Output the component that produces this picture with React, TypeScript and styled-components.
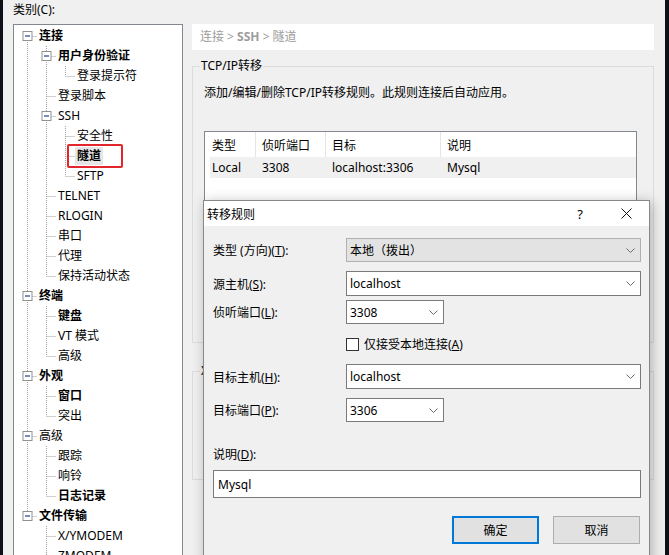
import React from 'react';
import styled, { createGlobalStyle } from 'styled-components';

const GlobalStyle = createGlobalStyle`
  html, body { margin: 0; padding: 0; background: #0d1018; }
  body {
    font-family: "Noto Sans", "Noto Sans CJK SC", sans-serif;
    font-size: 12px;
    color: #000;
  }
  #root { width: 669px; height: 555px; overflow: hidden; }
`;

type TreeNode = { label: string; level: number; bold?: boolean; open?: boolean; selected?: boolean };

const tree: TreeNode[] = [
  { label: '连接', level: 0, bold: true, open: true },
  { label: '用户身份验证', level: 1, bold: true, open: true },
  { label: '登录提示符', level: 2 },
  { label: '登录脚本', level: 1 },
  { label: 'SSH', level: 1, open: true },
  { label: '安全性', level: 2 },
  { label: '隧道', level: 2, bold: true, selected: true },
  { label: 'SFTP', level: 2 },
  { label: 'TELNET', level: 1 },
  { label: 'RLOGIN', level: 1 },
  { label: '串口', level: 1 },
  { label: '代理', level: 1 },
  { label: '保持活动状态', level: 1 },
  { label: '终端', level: 0, bold: true, open: true },
  { label: '键盘', level: 1, bold: true },
  { label: 'VT 模式', level: 1 },
  { label: '高级', level: 1 },
  { label: '外观', level: 0, bold: true, open: true },
  { label: '窗口', level: 1, bold: true },
  { label: '突出', level: 1 },
  { label: '高级', level: 0, open: true },
  { label: '跟踪', level: 1 },
  { label: '响铃', level: 1 },
  { label: '日志记录', level: 1, bold: true },
  { label: '文件传输', level: 0, bold: true, open: true },
  { label: 'X/YMODEM', level: 1 },
  { label: 'ZMODEM', level: 1 },
];

// does a later sibling at `level` follow row i (before the branch closes)?
const continues = (i: number, level: number) => {
  for (let j = i + 1; j < tree.length; j++) {
    if (tree[j].level < level) return false;
    if (tree[j].level === level) return true;
  }
  return false;
};

const Window = styled.div`
  position: relative;
  margin-left: 3px;
  width: 662px;
  height: 555px;
  background: #f0f0f0;
  display: flex;
  gap: 9px;
  padding-left: 10px;
  box-sizing: border-box;
  overflow: hidden;
`;

const LeftCol = styled.div`
  width: 170px;
  flex-shrink: 0;
`;

const CategoryLabel = styled.div`
  height: 24px;
  line-height: 20px;
`;

const TreeBox = styled.div`
  height: 560px;
  border: 1px solid #828790;
  background: #fff;
  box-sizing: border-box;
  padding-top: 1px;
`;

const TreeRow = styled.div`
  display: flex;
  align-items: center;
  height: 20px;
`;

const TreeLabel = styled.span<{ $bold?: boolean; $selected?: boolean }>`
  position: relative;
  line-height: 18px;
  white-space: nowrap;
  font-weight: ${p => (p.$bold ? 700 : 400)};
  padding: 0 2px;
  margin-left: -2px;
  background: ${p => (p.$selected ? '#e6e6e6' : 'transparent')};
  &::after {
    content: '';
    display: ${p => (p.$selected ? 'block' : 'none')};
    position: absolute;
    left: -8px;
    right: -20px;
    top: -3px;
    bottom: -3px;
    border: 2px solid #e3262b;
    border-radius: 2px;
  }
`;

const RightCol = styled.div`
  width: 462px;
  flex-shrink: 0;
  padding-top: 24px;
`;

const Crumb = styled.div`
  height: 26px;
  line-height: 26px;
  background: #fff;
  padding-left: 8px;
  color: #9d9d9d;
  b { font-weight: 700; }
`;

const Group = styled.fieldset<{ $top: number; $height: number }>`
  margin: ${p => p.$top}px 0 0;
  padding: 0 7px;
  min-width: 0;
  height: ${p => p.$height}px;
  box-sizing: border-box;
  border: 1px solid #dcdcdc;
`;

const Legend = styled.legend`
  padding: 0 1px;
  line-height: 16px;
`;

const Description = styled.div`
  margin-top: 9px;
  padding-left: 4px;
  line-height: 20px;
`;

const ListView = styled.div`
  margin: 28px 0 0 4px;
  width: 433px;
  height: 150px;
  border: 1px solid #828790;
  background: #fff;
  box-sizing: border-box;
`;

const ListRow = styled.div<{ $header?: boolean }>`
  display: grid;
  grid-template-columns: 51px 70px 115px 1fr;
  height: ${p => (p.$header ? 25 : 21)}px;
  background: ${p => (p.$header ? '#fff' : 'linear-gradient(to right, transparent 5px, #f0f0f0 5px)')};
`;

const Cell = styled.div<{ $header?: boolean }>`
  display: flex;
  align-items: center;
  padding-left: 6px;
  white-space: nowrap;
  box-sizing: border-box;
  border-right: 1px solid ${p => (p.$header ? '#e5e5e5' : 'transparent')};
  &:first-child { padding-left: 7px; }
  &:last-child { border-right: none; }
`;

const Dialog = styled.div`
  position: absolute;
  left: 200px;
  top: 200px;
  width: 447px;
  height: 380px;
  border: 1px solid #888;
  background: #f0f0f0;
  box-sizing: border-box;
  box-shadow: 2px 2px 12px rgba(0, 0, 0, 0.28);
`;

const TitleBar = styled.div`
  height: 25px;
  display: flex;
  align-items: center;
  background: #fff;
  padding-left: 3px;
`;

const TitleText = styled.span`
  flex: 1;
`;

const TitleButton = styled.div`
  width: 46px;
  height: 25px;
  display: flex;
  align-items: center;
  justify-content: center;
  font-size: 13px;
`;

const DialogBody = styled.div`
  padding: 0 8px 0 9px;
`;

const FieldRow = styled.div<{ $top: number; $height: number }>`
  display: grid;
  grid-template-columns: 133px 1fr;
  align-items: center;
  margin-top: ${p => p.$top}px;
  height: ${p => p.$height}px;
`;

const Combo = styled.div<{ $width?: number; $disabled?: boolean }>`
  display: flex;
  align-items: center;
  height: 100%;
  width: ${p => (p.$width ? `${p.$width}px` : '100%')};
  box-sizing: border-box;
  padding: 0 5px 0 3px;
  border: 1px solid ${p => (p.$disabled ? '#b0b0b0' : '#7a7a7a')};
  background: ${p => (p.$disabled ? '#e3e3e3' : '#fff')};
  span { flex: 1; }
`;

const CheckLine = styled.label`
  grid-column: 2;
  display: flex;
  align-items: center;
  gap: 5px;
`;

const CheckBox = styled.span`
  width: 13px;
  height: 13px;
  border: 1px solid #333;
  background: #fff;
  box-sizing: border-box;
`;

const PlainLabel = styled.div<{ $top: number }>`
  margin-top: ${p => p.$top}px;
  line-height: 20px;
`;

const TextField = styled.div`
  margin-top: 5px;
  height: 28px;
  display: flex;
  align-items: center;
  padding-left: 4px;
  border: 1px solid #7a7a7a;
  background: #fff;
  box-sizing: border-box;
`;

const ButtonBar = styled.div`
  display: flex;
  justify-content: flex-end;
  gap: 14px;
  margin-top: 18px;
  padding-right: 1px;
`;

const Button = styled.div<{ $primary?: boolean }>`
  width: 87px;
  height: 28px;
  display: flex;
  align-items: center;
  justify-content: center;
  box-sizing: border-box;
  background: #e1e1e1;
  border: ${p => (p.$primary ? '2px solid #0078d7' : '1px solid #adadad')};
`;

const Chevron = () => (
  <svg width="9" height="5" viewBox="0 0 9 5">
    <path d="M0.5 0.5 L4.5 4.5 L8.5 0.5" fill="none" stroke="#6a6a6a" strokeWidth="1" />
  </svg>
);

const TreeGutter = ({ index, node }: { index: number; node: TreeNode }) => {
  const n = node.level;
  const w = 25 + 19 * n;
  const x = (k: number) => 13 + 19 * k + 0.5;
  const dots = { stroke: '#a0a0a0', strokeWidth: 1, strokeDasharray: '1 1' };
  const lines: React.ReactNode[] = [];
  for (let k = 0; k < n; k++) {
    if (continues(index, k)) lines.push(<line key={`a${k}`} x1={x(k)} y1={0} x2={x(k)} y2={20} {...dots} />);
  }
  const first = index === 0;
  lines.push(<line key="top" x1={x(n)} y1={first ? 10 : 0} x2={x(n)} y2={10} {...dots} />);
  if (continues(index, n)) lines.push(<line key="bot" x1={x(n)} y1={10} x2={x(n)} y2={20} {...dots} />);
  lines.push(<line key="h" x1={x(n)} y1={10.5} x2={x(n) + 10} y2={10.5} {...dots} />);
  return (
    <svg width={w} height={20} style={{ flexShrink: 0 }}>
      {lines}
      {node.open && (
        <g>
          <rect x={x(n) - 4.5} y={5.5} width={9} height={9} fill="#fff" stroke="#919191" />
          <line x1={x(n) - 2.5} y1={10} x2={x(n) + 2.5} y2={10} stroke="#1f3f91" strokeWidth="1.2" />
        </g>
      )}
    </svg>
  );
};

export default function App() {
  return (
    <>
      <GlobalStyle />
      <Window>
        <LeftCol>
          <CategoryLabel>类别(C):</CategoryLabel>
          <TreeBox>
            {tree.map((node, i) => (
              <TreeRow key={i}>
                <TreeGutter index={i} node={node} />
                <TreeLabel $bold={node.bold} $selected={node.selected}>{node.label}</TreeLabel>
              </TreeRow>
            ))}
          </TreeBox>
        </LeftCol>

        <RightCol>
          <Crumb>连接 &gt; <b>SSH</b> &gt; 隧道</Crumb>
          <Group $top={8} $height={285}>
            <Legend>TCP/IP转移</Legend>
            <Description>添加/编辑/删除TCP/IP转移规则。此规则连接后自动应用。</Description>
            <ListView>
              <ListRow $header>
                <Cell $header>类型</Cell>
                <Cell $header>侦听端口</Cell>
                <Cell $header>目标</Cell>
                <Cell $header>说明</Cell>
              </ListRow>
              <ListRow>
                <Cell>Local</Cell>
                <Cell>3308</Cell>
                <Cell>localhost:3306</Cell>
                <Cell>Mysql</Cell>
              </ListRow>
            </ListView>
          </Group>
          <Group $top={20} $height={117}>
            <Legend>X11转移</Legend>
          </Group>
        </RightCol>

        <Dialog>
          <TitleBar>
            <TitleText>转移规则</TitleText>
            <TitleButton>?</TitleButton>
            <TitleButton>
              <svg width="11" height="11" viewBox="0 0 11 11">
                <path d="M0.5 0.5 L10.5 10.5 M10.5 0.5 L0.5 10.5" stroke="#111" strokeWidth="1" />
              </svg>
            </TitleButton>
          </TitleBar>
          <DialogBody>
            <FieldRow $top={12} $height={24}>
              <span>类型 (方向)(<u>T</u>):</span>
              <Combo $disabled><span>本地（拨出）</span><Chevron /></Combo>
            </FieldRow>
            <FieldRow $top={9} $height={25}>
              <span>源主机(<u>S</u>):</span>
              <Combo><span>localhost</span><Chevron /></Combo>
            </FieldRow>
            <FieldRow $top={4} $height={24}>
              <span>侦听端口(<u>L</u>):</span>
              <Combo $width={98}><span>3308</span><Chevron /></Combo>
            </FieldRow>
            <FieldRow $top={11} $height={16}>
              <CheckLine><CheckBox /><span>仅接受本地连接(<u>A</u>)</span></CheckLine>
            </FieldRow>
            <FieldRow $top={13} $height={25}>
              <span>目标主机(<u>H</u>):</span>
              <Combo><span>localhost</span><Chevron /></Combo>
            </FieldRow>
            <FieldRow $top={9} $height={24}>
              <span>目标端口(<u>P</u>):</span>
              <Combo $width={98}><span>3306</span><Chevron /></Combo>
            </FieldRow>
            <PlainLabel $top={23}>说明(<u>D</u>):</PlainLabel>
            <TextField>Mysql</TextField>
            <ButtonBar>
              <Button $primary>确定</Button>
              <Button>取消</Button>
            </ButtonBar>
          </DialogBody>
        </Dialog>
      </Window>
    </>
  );
}
